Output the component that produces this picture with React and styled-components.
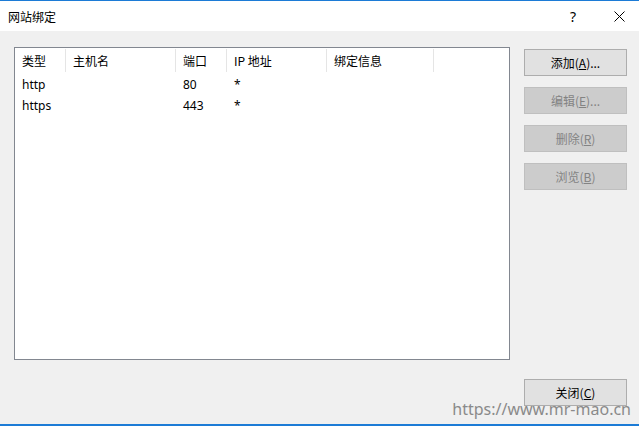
import React from 'react';
import styled, { createGlobalStyle } from 'styled-components';

const GlobalStyle = createGlobalStyle`
    html, body {
        margin: 0;
        padding: 0;
        background-color: #f0f0f0;
    }
    * {
        box-sizing: border-box;
    }
`;

const Window = styled.div`
    position: relative;
    width: 639px;
    height: 426px;
    display: flex;
    flex-direction: column;
    background-color: #f0f0f0;
    border-top: 1px solid #1c7bd6;
    border-bottom: 2px solid #1c7bd6;
    font-family: "Noto Sans", "Noto Sans CJK SC", sans-serif;
    font-size: 12px;
    color: #000;
    overflow: hidden;
`;

const TitleBar = styled.div`
    height: 30px;
    background-color: #fff;
    display: flex;
    align-items: center;
    padding-left: 8px;
`;

const Title = styled.div`
    flex: 1;
    font-family: "Noto Sans CJK SC", sans-serif;
    font-size: 12px;
`;

const TitleButton = styled.div`
    width: ${({ w }) => w}px;
    height: 30px;
    display: flex;
    align-items: center;
    justify-content: center;
    font-size: 14px;
`;

const Body = styled.div`
    flex: 1;
    display: flex;
    flex-direction: column;
    padding: 16px 12px 0 14px;
`;

const MainRow = styled.div`
    display: flex;
    gap: 14px;
`;

const ListBox = styled.div`
    width: 496px;
    height: 313px;
    background-color: #fff;
    border: 1px solid #828790;
`;

const HeaderRow = styled.div`
    display: flex;
    height: 26px;
    padding-top: 1px;
`;

const HeaderCell = styled.div`
    width: ${({ w }) => w}px;
    height: 23px;
    display: flex;
    align-items: center;
    padding-left: 7px;
    border-right: 1px solid #e5e5e5;
    font-family: "Noto Sans CJK SC", sans-serif;
`;

const DataRow = styled.div`
    display: flex;
    height: 21px;
    align-items: center;
`;

const DataCell = styled.div`
    width: ${({ w }) => w}px;
    padding-left: 7px;
`;

const ButtonColumn = styled.div`
    display: flex;
    flex-direction: column;
    gap: 11px;
    padding-top: 2px;
`;

const Button = styled.div`
    width: 103px;
    height: 27px;
    display: flex;
    align-items: center;
    justify-content: center;
    font-family: "Noto Sans CJK SC", sans-serif;
    font-size: 12px;
    background-color: ${({ disabled }) => (disabled ? '#cccccc' : '#e1e1e1')};
    border: 1px solid ${({ disabled }) => (disabled ? '#bfbfbf' : '#adadad')};
    color: ${({ disabled }) => (disabled ? '#838383' : '#000')};
`;

const Key = styled.span`
    text-decoration: underline;
`;

const Footer = styled.div`
    display: flex;
    justify-content: flex-end;
    padding-top: 19px;
`;

const Watermark = styled.div`
    position: absolute;
    right: 8px;
    bottom: 4px;
    font-family: "Noto Sans", sans-serif;
    font-size: 16px;
    color: #8a8a8a;
`;

const columns = [
    { title: '类型', w: 51 },
    { title: '主机名', w: 110 },
    { title: '端口', w: 51 },
    { title: 'IP 地址', w: 100 },
    { title: '绑定信息', w: 107 },
];

const bindings = [
    ['http', '', '80', '*', ''],
    ['https', '', '443', '*', ''],
];

function App() {
    return (
        <>
            <GlobalStyle />
            <Window>
                <TitleBar>
                    <Title>网站绑定</Title>
                    <TitleButton w={52}>?</TitleButton>
                    <TitleButton w={40}>
                        <svg width="11" height="11" viewBox="0 0 11 11">
                            <path d="M0.5 0.5 L10.5 10.5 M10.5 0.5 L0.5 10.5" stroke="#000" strokeWidth="1" />
                        </svg>
                    </TitleButton>
                </TitleBar>
                <Body>
                    <MainRow>
                        <ListBox>
                            <HeaderRow>
                                {columns.map((c) => (
                                    <HeaderCell key={c.title} w={c.w}>{c.title}</HeaderCell>
                                ))}
                            </HeaderRow>
                            {bindings.map((row, i) => (
                                <DataRow key={i}>
                                    {row.map((v, j) => (
                                        <DataCell key={j} w={columns[j].w}>{v}</DataCell>
                                    ))}
                                </DataRow>
                            ))}
                        </ListBox>
                        <ButtonColumn>
                            <Button>添加(<Key>A</Key>)...</Button>
                            <Button disabled>编辑(<Key>E</Key>)...</Button>
                            <Button disabled>删除(<Key>R</Key>)</Button>
                            <Button disabled>浏览(<Key>B</Key>)</Button>
                        </ButtonColumn>
                    </MainRow>
                    <Footer>
                        <Button>关闭(<Key>C</Key>)</Button>
                    </Footer>
                </Body>
                <Watermark>https://www.mr-mao.cn</Watermark>
            </Window>
        </>
    );
}

export default App;
